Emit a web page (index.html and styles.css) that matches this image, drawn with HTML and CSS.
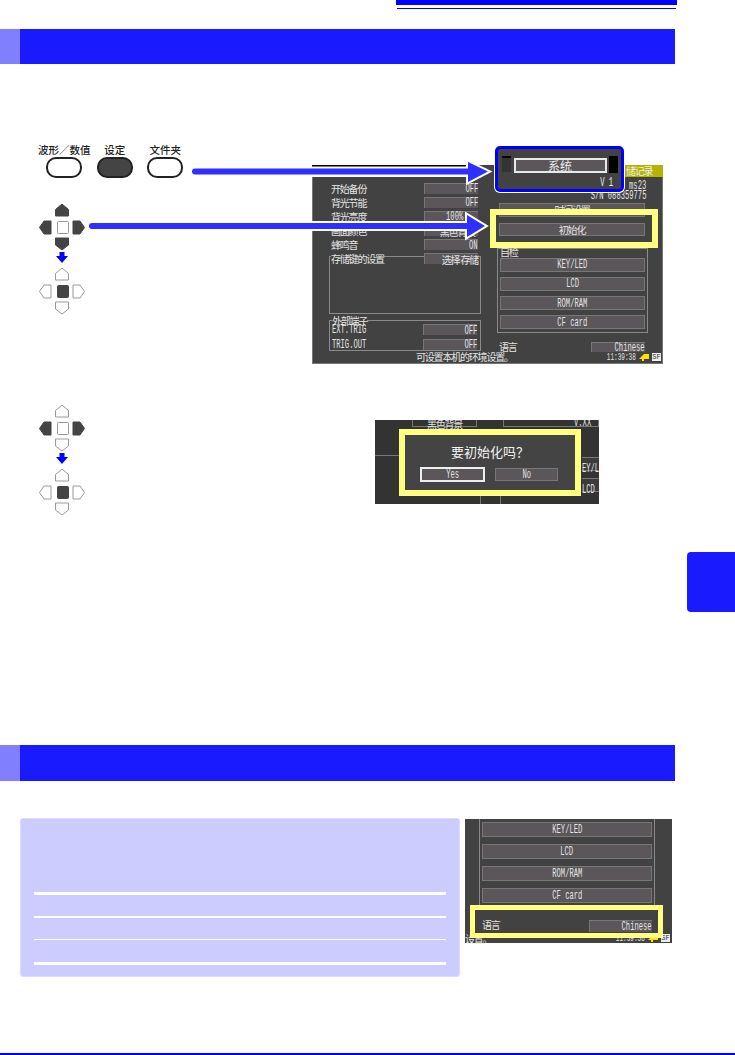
FILE: index.html
```html
<!DOCTYPE html>
<html lang="zh-CN">
<head>
    <meta charset="UTF-8">
    <meta name="viewport" content="width=device-width, initial-scale=1.0">
    <title>系统 初始化</title>
    <link rel="stylesheet" href="styles.css">
</head>
<body>
    <svg class="defs" width="0" height="0">
        <defs>
            <path id="key-up" d="M18.5 13V6.5L25 1l6.500 5.500V13Z"/>
            <path id="key-left" d="M14 18H7L2.500 24.500 7 31H14Z"/>
            <path id="key-right" d="M36 18H43L47.500 24.500 43 31H36Z"/>
            <path id="key-down" d="M18.500 35H31.500V42L25 47 18.500 42Z"/>
            <rect id="key-mid" x="20.500" y="18.500" width="11" height="12" rx="1"/>
        </defs>
    </svg>

    <div class="page">
        <div class="page-head"><div class="head-bar"></div><div class="head-line"></div></div>

        <div class="section-bar"><div class="section-tab"></div></div>

        <!-- system screen with the key sequence -->
        <section class="figure-one">
            <div class="controls">
                <div class="press-row">
                    <div class="press-item"><span class="press-label">波形／数值</span><div class="press"></div></div>
                    <div class="press-item"><span class="press-label">设定</span><div class="press press-on"></div></div>
                    <div class="press-item"><span class="press-label">文件夹</span><div class="press"></div></div>
                </div>
                <svg class="dpad dpad-first" width="50" height="112" viewBox="0 0 50 112">
                    <g class="key-on"><use href="#key-up"/><use href="#key-left"/><use href="#key-right"/><use href="#key-down"/></g>
                    <use class="key-off" href="#key-mid"/>
                    <path class="key-arrow" d="M22.500 49H27.500V53H31L25 60 19 53H22.500Z"/>
                    <g transform="translate(0 64)">
                        <g class="key-off"><use href="#key-up"/><use href="#key-left"/><use href="#key-right"/><use href="#key-down"/></g>
                        <use class="key-on" href="#key-mid"/>
                    </g>
                </svg>
            </div>

            <div class="screen screen-main">
                <div class="screen-tabs">
                    <div class="tab-blank"></div>
                    <div class="tab-dark"></div>
                    <div class="tab-olive cjk">储记录</div>
                </div>
                <div class="screen-body">
                    <div class="col-left">
                        <div class="lcd-row"><span class="cjk">开始备份</span><span class="field"><span class="lat">OFF</span></span></div>
                        <div class="lcd-row"><span class="cjk">背光节能</span><span class="field"><span class="lat">OFF</span></span></div>
                        <div class="lcd-row"><span class="cjk">背光亮度</span><span class="field field-pad"><span class="lat">100%</span></span></div>
                        <div class="lcd-row"><span class="cjk">画面颜色</span><span class="field field-pad-small"><span class="cjk">黑色背景</span></span></div>
                        <div class="lcd-row"><span class="cjk">蜂鸣音</span><span class="field"><span class="lat">ON</span></span></div>
                        <div class="lcd-row lcd-row-top"><span class="cjk group-label">存储键的设置</span><span class="field"><span class="cjk">选择 存储</span></span></div>
                        <div class="group group-store"></div>
                        <div class="group group-ext">
                            <span class="cjk ext-label">外部端子</span>
                            <div class="lcd-row"><span class="lat lat-left">EXT.TRIG</span><span class="field"><span class="lat">OFF</span></span></div>
                            <div class="lcd-row"><span class="lat lat-left">TRIG.OUT</span><span class="field"><span class="lat">OFF</span></span></div>
                        </div>
                    </div>
                    <div class="col-right">
                        <div class="info-line"><span class="lat">ms23</span></div>
                        <div class="info-line"><span class="lat">S/N 088359775</span></div>
                        <div class="btn btn-time"><span class="cjk">时间设置</span></div>
                        <div class="btn btn-init"><span class="cjk">初始化</span></div>
                        <div class="group group-check">
                            <span class="cjk check-label">自检</span>
                            <div class="btn"><span class="lat">KEY/LED</span></div>
                            <div class="btn"><span class="lat">LCD</span></div>
                            <div class="btn"><span class="lat">ROM/RAM</span></div>
                            <div class="btn"><span class="lat">CF card</span></div>
                        </div>
                        <div class="lang-row">
                            <span class="cjk">语言</span>
                            <span class="field field-lang"><span class="lat">Chinese</span></span>
                        </div>
                    </div>
                </div>
                <div class="screen-foot">
                    <span class="cjk foot-hint">可设置本机的环境设置。</span>
                    <span class="lat foot-time">11:39:38</span>
                    <svg class="foot-plug" width="11" height="8" viewBox="0 0 11 8"><path d="M0 6L3 3 5 1H10V6H5V8H3V6Z"/></svg>
                    <span class="foot-box">SF</span>
                </div>
            </div>

            <div class="system-box">
                <div class="system-top">
                    <div class="system-black"></div>
                    <div class="system-title cjk">系统</div>
                    <div class="system-black"></div>
                </div>
                <div class="system-ver"><span class="lat">V 1</span></div>
            </div>
            <div class="mark mark-init"></div>

            <svg class="arrows" width="735" height="340" viewBox="0 64 735 340">
                <path d="M195 168.500H468V162L488 171.500 468 182V174.500H195A3 3 0 0 1 195 168.500Z"/>
                <path d="M92 223H467V215L485 226 467 237V229H92A3 3 0 0 1 92 223Z"/>
            </svg>
        </section>

        <!-- confirm dialog -->
        <section class="figure-two">
            <svg class="dpad" width="50" height="112" viewBox="0 0 50 112">
                <g class="key-off"><use href="#key-up"/><use href="#key-down"/><use href="#key-mid"/></g>
                <g class="key-on"><use href="#key-left"/><use href="#key-right"/></g>
                <path class="key-arrow" d="M22.500 49H27.500V53H31L25 60 19 53H22.500Z"/>
                <g transform="translate(0 64)">
                    <g class="key-off"><use href="#key-up"/><use href="#key-left"/><use href="#key-right"/><use href="#key-down"/></g>
                    <use class="key-on" href="#key-mid"/>
                </g>
            </svg>

            <div class="screen screen-dialog">
                <div class="under-top">
                    <span class="under-field cjk">黑色背景</span>
                    <span class="under-field under-ver"><span class="lat">V.XX</span></span>
                </div>
                <div class="under-rule"></div>
                <div class="under-right">
                    <div class="under-btn"><span class="lat lat-left">EY/L</span></div>
                    <div class="under-btn"><span class="lat lat-left">LCD</span></div>
                </div>
                <div class="under-legs"></div>
                <div class="dialog">
                    <div class="dialog-text cjk">要初始化吗？</div>
                    <div class="dialog-btns">
                        <div class="dialog-btn dialog-btn-on"><span class="lat">Yes</span></div>
                        <div class="dialog-btn"><span class="lat">No</span></div>
                    </div>
                </div>
            </div>
        </section>

        <div class="side-tab"></div>

        <div class="section-bar section-bar-low"><div class="section-tab"></div></div>

        <!-- language -->
        <section class="figure-three">
            <div class="note">
                <div class="note-rule note-rule-thick"></div>
                <div class="note-rule note-rule-mid"></div>
                <div class="note-rule note-rule-thin"></div>
                <div class="note-rule note-rule-thick"></div>
            </div>
            <div class="screen screen-lang">
                <div class="lang-group">
                    <div class="btn"><span class="lat">KEY/LED</span></div>
                    <div class="btn"><span class="lat">LCD</span></div>
                    <div class="btn"><span class="lat">ROM/RAM</span></div>
                    <div class="btn"><span class="lat">CF card</span></div>
                </div>
                <div class="lang-line">
                    <span class="cjk">语言</span>
                    <span class="field field-chinese"><span class="lat">Chinese</span></span>
                </div>
                <div class="lang-foot">
                    <span class="cjk">设置。</span>
                    <span class="lat foot-time">11:39:38</span>
                    <svg class="foot-plug" width="11" height="8" viewBox="0 0 11 8"><path d="M0 6L3 3 5 1H10V6H5V8H3V6Z"/></svg>
                    <span class="foot-box">SF</span>
                </div>
                <div class="mark mark-lang"></div>
            </div>
        </section>

        <div class="page-foot"></div>
    </div>
</body>
</html>
```

FILE: styles.css
```css
html, body {
    margin: 0;
    padding: 0;
    background-color: #fff;
}
.defs {
    position: absolute;
}
.page {
    width: 735px;
    height: 1055px;
    display: flex;
    flex-direction: column;
    position: relative;
    overflow: hidden;
}

/* page furniture */
.page-head {
    margin-left: 396px;
    width: 281px;
}
.head-bar {
    height: 5px;
    background-color: #0000ff;
}
.head-line {
    height: 1px;
    margin: 3px 1px 0;
    background-color: #0000ff;
}
.section-bar {
    height: 35px;
    margin-top: 20px;
    width: 675px;
    background-color: #1a1aff;
    flex-shrink: 0;
}
.section-tab {
    width: 20px;
    height: 100%;
    background-color: #8080ff;
}
.section-bar-low {
    height: 36px;
    margin-top: 133px;
}
.side-tab {
    width: 48px;
    height: 60px;
    margin-left: 687px;
    background-color: #1a1aff;
    border-radius: 4px 0 0 4px;
    flex-shrink: 0;
}
.page-foot {
    height: 2px;
    margin-top: auto;
    background-color: #0000ff;
}

/* shared lcd text */
.cjk {
    font-family: "Noto Sans CJK SC", sans-serif;
    font-size: 10px;
    line-height: 11px;
    letter-spacing: -1.2px;
    white-space: nowrap;
}
.lat {
    display: inline-block;
    font-family: "Liberation Mono", monospace;
    font-size: 13px;
    line-height: 11px;
    white-space: nowrap;
    transform: scaleX(0.55);
}
.lat-left {
    transform-origin: left center;
}
.screen {
    background-color: #424242;
    color: #e4e4e4;
    position: relative;
    flex-shrink: 0;
}
.field {
    width: 54px;
    height: 11px;
    box-sizing: border-box;
    border: 1px solid #777;
    border-width: 1px 0 0 1px;
    background-color: #5a565a;
    display: flex;
    justify-content: flex-end;
    align-items: center;
}
.field .lat {
    transform-origin: right center;
}
.field-pad {
    padding-right: 15px;
}
.field-pad-small {
    padding-right: 3px;
}
.btn {
    height: 14px;
    box-sizing: border-box;
    border: 1px solid #777;
    background-color: #5a565a;
    display: flex;
    justify-content: center;
    align-items: center;
}
.group {
    border: 1px solid #8a8a8a;
    box-sizing: border-box;
}
.mark {
    position: absolute;
    box-sizing: border-box;
    border: 6px solid #ffff80;
}

/* first figure */
.figure-one {
    height: 340px;
    display: flex;
    align-items: flex-start;
    flex-shrink: 0;
}
.controls {
    width: 312px;
    padding-top: 79px;
    flex-shrink: 0;
}
.press-row {
    display: grid;
    grid-template-columns: repeat(3, 50.500px);
    margin-left: 39px;
}
.press-item {
    display: flex;
    flex-direction: column;
    align-items: center;
}
.press-label {
    font-family: "Noto Sans CJK SC", sans-serif;
    font-size: 10.500px;
    font-weight: 500;
    line-height: 14px;
    color: #222;
    white-space: nowrap;
}
.press {
    width: 36px;
    height: 21px;
    box-sizing: border-box;
    border: 2px solid #222;
    border-radius: 10px;
    background-color: #fff;
}
.press-on {
    background-color: #444;
}
.dpad {
    display: block;
}
.dpad-first {
    margin: 25px 0 0 37px;
}
.key-on {
    fill: #444;
    stroke: #444;
}
.key-off {
    fill: #fff;
    stroke: #999;
}
.key-arrow {
    fill: #0000ff;
}
.arrows {
    position: absolute;
    left: 0;
    top: 64px;
}
.arrows path {
    fill: #2f2fff;
    stroke: #fff;
    stroke-width: 4px;
    paint-order: stroke;
}

/* main screen */
.screen-main {
    width: 351px;
    margin-top: 101px;
    height: 199px;
    display: flex;
    flex-direction: column;
}
.screen-tabs {
    height: 12px;
    display: flex;
    background-color: #fff;
}
.tab-blank {
    width: 166px;
    border-top: 2px solid #000;
}
.tab-dark {
    flex: 1;
    background-color: #424242;
}
.tab-olive {
    width: 38px;
    padding-left: 1px;
    box-sizing: border-box;
    background-color: #b4b400;
    color: #eee;
}
.screen-body {
    flex: 1;
    display: flex;
    padding: 6px 14px 0 16px;
    border-left: 1px solid #777;
    border-right: 1px solid #777;
}
.col-left {
    width: 152px;
    padding-right: 16px;
    flex-shrink: 0;
}
.lcd-row {
    display: flex;
    justify-content: space-between;
    align-items: center;
    height: 11px;
    margin-bottom: 3.200px;
    padding: 0 3px 0 2px;
}
.lcd-row-top {
    position: relative;
    margin-bottom: 0;
}
.group-label {
    background-color: #424242;
}
.group-store {
    height: 58px;
    margin-top: -8px;
}
.group-ext {
    height: 31px;
    margin-top: 6px;
    padding-top: 3px;
    position: relative;
}
.ext-label {
    position: absolute;
    left: 2px;
    top: -6px;
    background-color: #424242;
}
.col-right {
    flex: 1;
    padding: 0 3px 0 2px;
    margin-top: -2px;
    position: relative;
}
.info-line {
    height: 10px;
    display: flex;
    justify-content: flex-end;
    align-items: center;
    margin-right: -1px;
}
.info-line .lat {
    transform-origin: right center;
}
.btn-time {
    margin-top: 2px;
}
.btn-init {
    margin-top: 6px;
    height: 13px;
}
.group-check {
    height: 85px;
    margin: 12px -3px 0 -2px;
    padding: 9px 2px 0;
    position: relative;
    display: flex;
    flex-direction: column;
    gap: 5.300px;
}
.check-label {
    position: absolute;
    left: 2px;
    top: -3px;
}
.lang-row {
    display: flex;
    justify-content: space-between;
    align-items: center;
    margin-top: 9px;
    height: 10px;
}
.field-lang {
    height: 10px;
}
.screen-foot {
    height: 12px;
    display: flex;
    align-items: center;
    padding-right: 1px;
    border: 1px solid #777;
    border-width: 0 1px 1px;
}
.foot-hint {
    margin: -1px 0 0 103px;
}
.foot-time {
    font-size: 11px;
    margin-left: auto;
    transform-origin: right center;
}
.foot-plug {
    fill: #ffe000;
    margin: 0 2px 0 3px;
}
.foot-box {
    width: 9px;
    height: 8px;
    background-color: #eee;
    color: #333;
    font: 7px/8px "Liberation Mono", monospace;
    text-align: center;
}

/* overlays on the main screen */
.system-box {
    position: absolute;
    left: 495px;
    top: 146px;
    width: 129px;
    height: 46px;
    box-sizing: border-box;
    border: 3px solid #0000ff;
    border-radius: 5px;
    box-shadow: 0 0 0 1px #fff;
    background-color: #424242;
    padding-top: 7px;
}
.system-top {
    display: flex;
    justify-content: space-between;
    height: 17px;
    padding: 0 3px 0 4px;
}
.system-black {
    width: 9px;
    background-color: #000;
}
.system-black:first-child {
    height: 14px;
    background-color: #333;
    border-top: 2px solid #000;
}
.system-title {
    width: 93px;
    margin-top: 2px;
    height: 15px;
    box-sizing: border-box;
    border: 2px solid #e8e8e8;
    background-color: #5a565a;
    color: #eee;
    font-size: 12px;
    letter-spacing: 0;
    text-align: center;
}
.system-ver {
    display: flex;
    justify-content: flex-end;
    padding-right: 3px;
    color: #eee;
    margin-top: 4px;
}
.mark-init {
    left: 490px;
    top: 209px;
    width: 168px;
    height: 39px;
}

/* second figure */
.figure-two {
    height: 148px;
    display: flex;
    align-items: flex-start;
    padding-left: 37px;
    flex-shrink: 0;
}
.screen-dialog {
    width: 224px;
    height: 84px;
    margin: 16px 0 0 288px;
    background-color: #333;
    overflow: hidden;
}
.under-top {
    display: flex;
    justify-content: space-between;
    padding-left: 37px;
    height: 7px;
}
.under-field {
    width: 65px;
    height: 7px;
    border: 1px solid #777;
    border-top: 0;
    text-align: center;
    line-height: 7px;
    box-sizing: border-box;
}
.under-ver {
    width: 96px;
    text-align: right;
}
.under-ver .lat {
    line-height: 5px;
    vertical-align: top;
}
.under-rule {
    height: 1px;
    width: 26px;
    margin-top: 28px;
    background-color: #777;
}
.under-right {
    width: 17px;
    margin: 1px 0 0 auto;
}
.under-btn {
    height: 14px;
    margin-bottom: 7px;
    border: 1px solid #777;
    border-width: 1px 0;
    box-sizing: border-box;
    background-color: #3c3a3c;
}
.under-legs {
    position: absolute;
    left: 105px;
    bottom: 0;
    width: 19px;
    height: 8px;
    border: 1px solid #777;
    border-width: 0 1px;
}
.dialog {
    position: absolute;
    left: 24px;
    top: 9px;
    width: 182px;
    height: 67px;
    box-sizing: border-box;
    border: 6px solid #ffff80;
    background-color: #444;
    padding-top: 9px;
    text-align: center;
}
.dialog-text {
    font-size: 13px;
    line-height: 16px;
    letter-spacing: 0;
    color: #f4f4f4;
}
.dialog-btns {
    display: flex;
    gap: 10px;
    margin: 7px 0 0 15px;
    align-items: center;
}
.dialog-btn {
    width: 63px;
    height: 13px;
    box-sizing: border-box;
    border: 1px solid #777;
    background-color: #5a565a;
    display: flex;
    justify-content: center;
    align-items: center;
}
.dialog-btn-on {
    width: 65px;
    height: 15px;
    border: 2px solid #eee;
}

/* third figure */
.figure-three {
    display: flex;
    gap: 5px;
    margin: 37px 0 0 20px;
    align-items: flex-start;
}
.note {
    width: 440px;
    height: 159px;
    box-sizing: border-box;
    border: 1px solid #dcdcff;
    border-radius: 3px;
    background-color: #ccccff;
    padding: 73px 13px 0;
}
.note-rule {
    background-color: #fff;
    margin-bottom: 21px;
}
.note-rule-thick {
    height: 3px;
}
.note-rule-mid {
    height: 2px;
}
.note-rule-thin {
    height: 1px;
    margin-bottom: 22px;
}
.screen-lang {
    width: 207px;
    height: 124px;
    margin-top: 1px;
    display: flex;
    flex-direction: column;
}
.lang-group {
    height: 86px;
    margin: 0 17px 0 14px;
    padding: 3px 2px 0;
    border: 1px solid #8a8a8a;
    border-width: 0 1px;
    display: flex;
    flex-direction: column;
    gap: 7px;
}
.lang-group .btn {
    height: 15px;
    flex-shrink: 0;
}
.lang-line {
    display: flex;
    justify-content: space-between;
    align-items: center;
    margin: 12px 20px 0 17px;
    height: 12px;
}
.lang-line .cjk {
    margin-top: -3px;
}
.field-chinese {
    width: 63px;
    height: 12px;
}
.lang-foot {
    display: flex;
    align-items: center;
    margin-top: auto;
    height: 10px;
    padding-right: 2px;
}
.mark-lang {
    left: 5px;
    top: 86px;
    width: 193px;
    height: 33px;
    border-width: 5px;
}
```
